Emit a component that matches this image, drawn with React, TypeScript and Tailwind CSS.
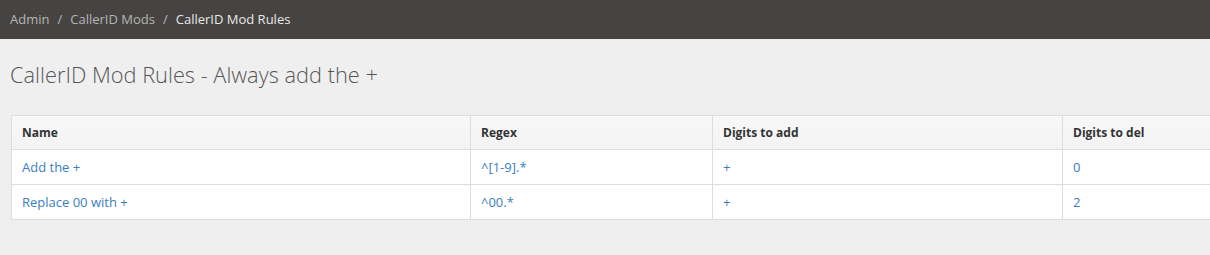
import React from "react";

interface Rule {
  name: string;
  regex: string;
  add: string;
  del: string;
}

const rules: Rule[] = [
  { name: "Add the +", regex: "^[1-9].*", add: "+", del: "0" },
  { name: "Replace 00 with +", regex: "^00.*", add: "+", del: "2" },
];

const crumbs = ["Admin", "CallerID Mods"];

const App: React.FC = () => {
  return (
    <div
      className="h-[255px] w-[1210px] overflow-hidden bg-[#efefef] text-[13px] text-[#333]"
      style={{ fontFamily: '"Open Sans", sans-serif' }}
    >
      {/* Breadcrumb bar */}
      <div className="flex h-[39px] items-center bg-[#454443] px-[10px]">
        {crumbs.map((c) => (
          <React.Fragment key={c}>
            <span className="text-[#b5b5b3]">{c}</span>
            <span className="px-[8px] text-[#b5b5b3]">/</span>
          </React.Fragment>
        ))}
        <span className="text-[#e8e8e6]">CallerID Mod Rules</span>
      </div>

      {/* Heading */}
      <h1
        className="mt-[20px] ml-[10px] text-[21.8px] font-light leading-[32px] text-[#555]"
        style={{ fontFamily: '"Open Sans Light", "Open Sans", sans-serif' }}
      >
        CallerID Mod Rules - Always add the +
      </h1>

      {/* Table */}
      <div className="mt-[24px] ml-[11px] w-[1240px]">
        <table className="w-full border-collapse border border-[#dddddd] bg-white">
          <thead>
            <tr className="bg-gradient-to-b from-[#f8f8f8] to-[#f3f3f3]">
              <th className="h-[34px] w-[459px] border border-[#dddddd] px-[10px] text-left text-[12px] font-bold">Name</th>
              <th className="w-[242px] border border-[#dddddd] px-[10px] text-left text-[12px] font-bold">Regex</th>
              <th className="w-[350px] border border-[#dddddd] px-[10px] text-left text-[12px] font-bold">Digits to add</th>
              <th className="border border-[#dddddd] px-[10px] text-left text-[12px] font-bold">Digits to del</th>
            </tr>
          </thead>
          <tbody>
            {rules.map((r) => (
              <tr key={r.name}>
                <td className="h-[35px] border border-[#dddddd] px-[10px] pt-[2px] text-[#3a7ebf]">{r.name}</td>
                <td className="border border-[#dddddd] px-[10px] pt-[2px] text-[#3a7ebf]">{r.regex}</td>
                <td className="border border-[#dddddd] px-[10px] pt-[2px] text-[#3a7ebf]">{r.add}</td>
                <td className="border border-[#dddddd] px-[10px] pt-[2px] text-[#3a7ebf]">{r.del}</td>
              </tr>
            ))}
          </tbody>
        </table>
      </div>
    </div>
  );
};

export default App;
